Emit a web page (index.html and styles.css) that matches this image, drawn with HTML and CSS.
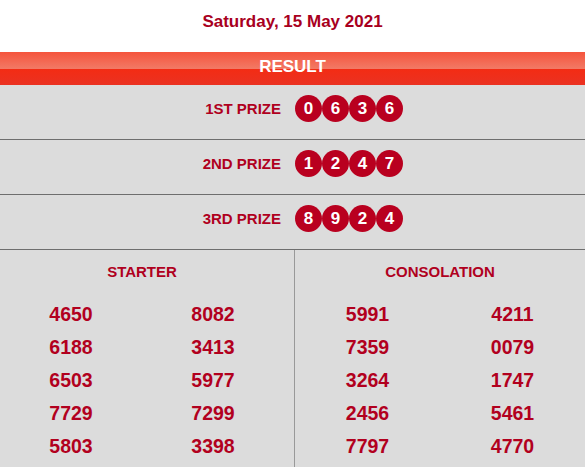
FILE: index.html
```html
<!DOCTYPE html>
<html lang="en">
<head>
<meta charset="utf-8">
<title>Result</title>
<link rel="stylesheet" href="styles.css">
</head>
<body>
<div class="page">
  <div class="date">Saturday, 15 May 2021</div>
  <div class="bar">RESULT</div>
  <div class="board">
    <div class="prize-row">
      <div class="prize-label">1ST PRIZE</div>
      <div class="balls"><span class="ball">0</span><span class="ball">6</span><span class="ball">3</span><span class="ball">6</span></div>
    </div>
    <div class="prize-row">
      <div class="prize-label">2ND PRIZE</div>
      <div class="balls"><span class="ball">1</span><span class="ball">2</span><span class="ball">4</span><span class="ball">7</span></div>
    </div>
    <div class="prize-row">
      <div class="prize-label">3RD PRIZE</div>
      <div class="balls"><span class="ball">8</span><span class="ball">9</span><span class="ball">2</span><span class="ball">4</span></div>
    </div>
    <div class="lists">
      <div class="list list-left">
        <div class="list-title">STARTER</div>
        <div class="nums">
          <span>4650</span><span>8082</span>
          <span>6188</span><span>3413</span>
          <span>6503</span><span>5977</span>
          <span>7729</span><span>7299</span>
          <span>5803</span><span>3398</span>
        </div>
      </div>
      <div class="list list-right">
        <div class="list-title">CONSOLATION</div>
        <div class="nums">
          <span>5991</span><span>4211</span>
          <span>7359</span><span>0079</span>
          <span>3264</span><span>1747</span>
          <span>2456</span><span>5461</span>
          <span>7797</span><span>4770</span>
        </div>
      </div>
    </div>
  </div>
</div>
</body>
</html>
```
FILE: styles.css
```css
html, body {
  margin: 0;
  padding: 0;
  background: #dcdcdc;
}
body {
  font-family: "Liberation Sans", Arial, sans-serif;
  font-weight: bold;
}
.page {
  width: 585px;
  height: 467px;
  overflow: hidden;
  background: #dcdcdc;
}
.date {
  background: #ffffff;
  height: 52px;
  box-sizing: border-box;
  padding-top: 12px;
  line-height: 20px;
  font-size: 17px;
  text-align: center;
  color: #a8001e;
}
.bar {
  height: 33px;
  box-sizing: border-box;
  padding-top: 5px;
  line-height: 20px;
  font-size: 17px;
  color: #ffffff;
  text-align: center;
  background: linear-gradient(to bottom, #f5543c 0, #f27a66 17px, #f32c14 17px, #ea3222 33px);
}
.prize-row {
  display: grid;
  grid-template-columns: 288px 1fr;
  align-items: center;
  height: 55px;
  box-sizing: border-box;
  padding: 10px 0 17px;
  border-bottom: 1px solid #6e6e6e;
}
.prize-label {
  text-align: right;
  padding-right: 7px;
  font-size: 15px;
  color: #b0001e;
}
.balls {
  display: flex;
  padding-left: 7px;
}
.ball {
  width: 27px;
  height: 27px;
  border-radius: 50%;
  background: #b9001f;
  color: #ffffff;
  font-size: 17px;
  line-height: 27px;
  text-align: center;
}
.lists {
  display: grid;
  grid-template-columns: 294px 1fr;
}
.list {
  padding-top: 12px;
  height: 230px;
}
.list-left {
  padding-right: 10px;
}
.list-right {
  border-left: 1px solid #999999;
}
.list-title {
  text-align: center;
  font-size: 15px;
  line-height: 20px;
  color: #b0001e;
}
.nums {
  margin-top: 16px;
  display: grid;
  grid-template-columns: 1fr 1fr;
  font-size: 19.5px;
  line-height: 33px;
  color: #b2001e;
  text-align: center;
}
```
